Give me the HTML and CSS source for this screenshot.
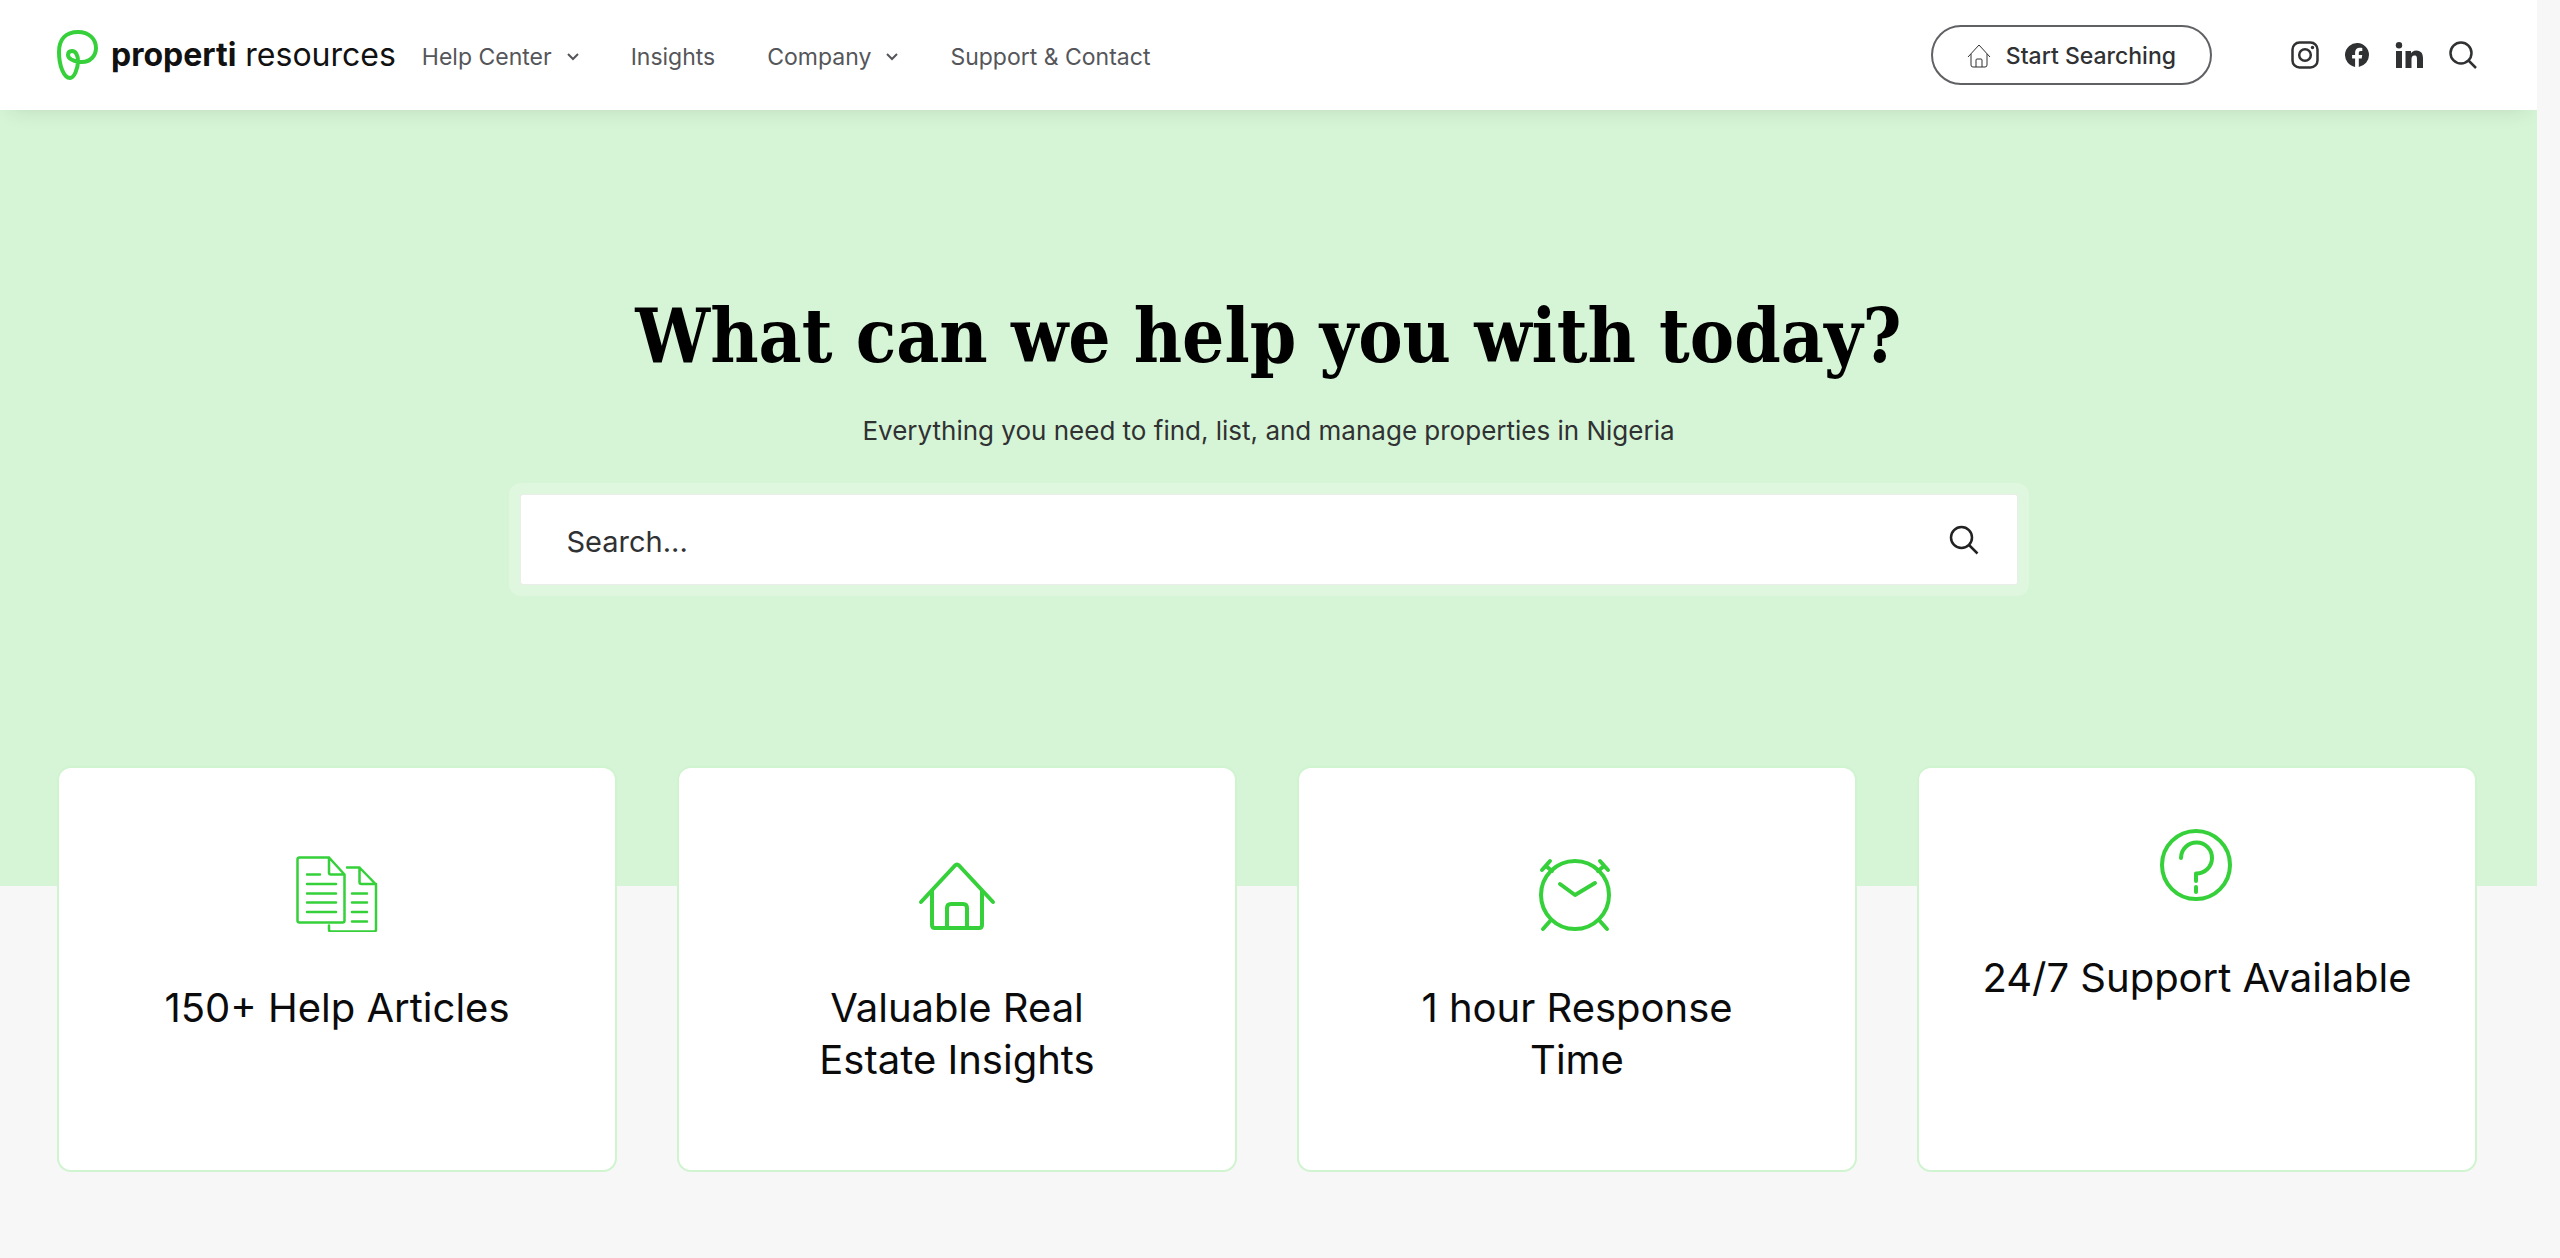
FILE: index.html
```html
<!DOCTYPE html>
<html lang="en">
<head>
<meta charset="utf-8">
<meta name="viewport" content="width=device-width, initial-scale=1">
<title>Properti Resources</title>
<link rel="stylesheet" href="styles.css">
</head>
<body>
<div class="page">
  <header class="header">
    <a class="logo" href="#">
      <svg class="logo-mark" viewBox="0 0 42 50" aria-hidden="true"><path d="M21 31C21 39 17 48 13 48C7 48 2 36 2 22C2 9 9 2 21 2C32 2 39 9 39 18C39 26 33 32 25 32C16 32 11 28 11 25C11 22 13 21 15 21C19 21 21 26 21 31Z"/></svg>
      <span class="logo-text"><b>properti</b> resources</span>
    </a>
    <nav class="nav">
      <a href="#">Help Center <svg class="chevron" viewBox="0 0 12 8" aria-hidden="true"><path d="M1 1l5 5 5-5"/></svg></a>
      <a href="#">Insights</a>
      <a href="#">Company <svg class="chevron" viewBox="0 0 12 8" aria-hidden="true"><path d="M1 1l5 5 5-5"/></svg></a>
      <a href="#">Support &amp; Contact</a>
    </nav>
    <a class="cta" href="#">
      <svg class="cta-icon" viewBox="0 0 24 24" aria-hidden="true"><path d="M1 13L12 1l11 12M4 10v11q0 2 2 2h12q2 0 2-2V10M9 23v-7q0-1 1-1h4q1 0 1 1v7"/></svg>
      Start Searching
    </a>
    <div class="social">
      <a href="#" aria-label="Instagram"><svg width="28" height="28" viewBox="0 0 28 28"><rect class="line" x="1.500" y="1.500" width="25" height="25" rx="7"/><circle class="line" cx="14" cy="14" r="5.800"/><circle cx="21.500" cy="6.500" r="1.700"/></svg></a>
      <a href="#" aria-label="Facebook"><svg width="24" height="24" viewBox="0 0 24 24"><path d="M24 12A12 12 0 1 0 10.1 23.9V15.500H7.100V12h3V9.400C10.100 6.400 11.900 4.700 14.600 4.700c1.300 0 2.700.2 2.700.2v3h-1.500c-1.500 0-2 .9-2 1.900V12h3.400l-.5 3.500h-2.900v8.400A12 12 0 0 0 24 12z"/></svg></a>
      <a href="#" aria-label="LinkedIn"><svg width="28" height="26" viewBox="0 0 28 26"><circle cx="4" cy="3.200" r="3.200"/><path d="M1 9h6v17H1zM10.500 9h5.500v2.400c.8-1.500 2.600-2.900 5.200-2.900 5.300 0 6.800 3.600 6.800 8.200V26h-6v-8.300c0-2 0-4.200-2.500-4.200s-3 1.800-3 4.100V26h-6z"/></svg></a>
      <a href="#" aria-label="Search"><svg width="28" height="28" viewBox="0 0 28 28"><circle class="line" cx="12" cy="12" r="10.500"/><path class="line" d="M19.500 19.500L27 27"/></svg></a>
    </div>
  </header>

  <main>
    <section class="hero">
      <h1>What can we help you with today?</h1>
      <p>Everything you need to find, list, and manage properties in Nigeria</p>
      <form class="search">
        <input type="text" placeholder="Search..." aria-label="Search">
        <button type="submit" aria-label="Search"><svg width="30" height="30" viewBox="0 0 30 30"><circle cx="12.500" cy="12.500" r="10.500"/><path d="M20 20l8.500 8.500"/></svg></button>
      </form>
    </section>

    <section class="cards">
      <article class="card">
        <svg class="card-icon thin" viewBox="0 0 82 76" aria-hidden="true"><path d="M33 1.500H3.500q-2 0-2 2v61q0 2 2 2h43q2 0 2-2V18.500zM33 1.500v15q0 2 2 2h13.500M11 18.500h13M11 28h29M11 37.500h29M11 46.500h29M11 56h29M51 11.500h12.500l16.500 17v45q0 2-2 2H35q-2 0-2-2v-4M63.500 11.500v14.500q0 2 2 2H80M56 37.500h15M56 46.500h15M56 56h15M56 65.500h15"/></svg>
        <h2>150+ Help Articles</h2>
      </article>
      <article class="card">
        <svg class="card-icon" viewBox="0 0 82 76" aria-hidden="true"><path d="M5 46L39 9.500q2-2 4 0L77 46M16 35v34q0 3 3 3h44q3 0 3-3V35M31 72V52q0-4 4-4h12q4 0 4 4v20"/></svg>
        <h2>Valuable Real<br>Estate Insights</h2>
      </article>
      <article class="card">
        <svg class="card-icon" viewBox="0 0 82 76" aria-hidden="true"><circle cx="39" cy="39" r="34"/><path d="M24 28l15 11 20-12M15 64l-8 9M63 64l8 9M6 14l8-9M10 10l6 5M72 14l-8-9M68 10l-6 5"/></svg>
        <h2>1 hour Response<br>Time</h2>
      </article>
      <article class="card card-high">
        <svg class="card-icon" viewBox="0 0 82 76" aria-hidden="true"><circle cx="40" cy="39" r="34"/><path d="M25 32a15.500 15.500 0 1 1 15 15.500v7.500M40 61v5"/></svg>
        <h2>24/7 Support Available</h2>
      </article>
    </section>
  </main>
</div>
</body>
</html>
```
FILE: styles.css
```css
* { box-sizing: border-box; }

body {
  margin: 0;
  background: #f7f7f7;
  font-family: Inter, "Liberation Sans", sans-serif;
  color: #303133;
}

a { color: inherit; text-decoration: none; }
svg { display: block; flex: none; }

.page { margin-right: 23px; overflow-x: clip; }

.header {
  position: relative;
  display: flex;
  align-items: center;
  height: 110px;
  padding: 0 60px 0 57px;
  background: #fff;
  box-shadow: 0 10px 20px -10px rgba(0, 0, 0, .12);
}

.logo { display: flex; align-items: center; gap: 12px; }
.logo-mark { width: 42px; height: 50px; fill: none; stroke: #35d03a; stroke-width: 4; }
.logo-text { font-size: 32px; line-height: 40px; color: #111; white-space: nowrap; }

.nav {
  display: flex;
  gap: 52px;
  margin: 4px auto 0 26px;
  font-size: 23px;
  line-height: 32px;
  color: #55565a;
}
.nav a { display: flex; align-items: center; gap: 15px; white-space: nowrap; }
.chevron { width: 12px; height: 8px; fill: none; stroke: currentColor; stroke-width: 2; }

.cta {
  display: flex;
  align-items: center;
  gap: 15px;
  height: 60px;
  padding: 2px 34px 0;
  border: 2px solid #606164;
  border-radius: 30px;
  font-size: 23px;
  font-weight: 500;
  white-space: nowrap;
}
.cta-icon { width: 24px; height: 24px; fill: none; stroke: currentColor; stroke-width: 1; }

.social { display: flex; align-items: center; gap: 26px; margin-left: 79px; fill: #303133; }
.line { fill: none; stroke: #303133; stroke-width: 2.5; }

.hero {
  display: flex;
  flex-direction: column;
  align-items: center;
  min-height: 776px;
  padding-top: 176px;
  background: #d6f5d6;
}
.hero h1 {
  margin: 0;
  font: bold 74px/100px "DejaVu Serif Condensed", "DejaVu Serif", serif;
  color: #000;
}
.hero p { margin: 25px 0 32px; font-size: 26px; line-height: 40px; }

.search {
  display: flex;
  width: 60%;
  max-width: 1520px;
  height: 113px;
  padding: 11px;
  border-radius: 12px;
  background: #dff6df;
}
.search input {
  flex: 1;
  min-width: 0;
  padding: 4px 0 0 46px;
  border: 1px solid #eaeeea;
  border-right: 0;
  border-radius: 3px 0 0 3px;
  background: #fff;
  font: inherit;
  font-size: 29px;
}
.search input::placeholder { color: #303133; opacity: 1; }
.search button {
  padding: 0 38px;
  border: 1px solid #eaeeea;
  border-left: 0;
  border-radius: 0 3px 3px 0;
  background: #fff;
}
.search svg { fill: none; stroke: #222; stroke-width: 2.5; }

.cards {
  position: relative;
  display: grid;
  grid-template-columns: repeat(4, 1fr);
  gap: 60px;
  margin-top: -120px;
  padding: 0 60px 60px 57px;
}
.card {
  display: flex;
  flex-direction: column;
  align-items: center;
  min-height: 406px;
  padding: 88px 24px 40px;
  border: 2px solid #d0f3d0;
  border-radius: 14px;
  background: #fff;
  text-align: center;
}
.card-high { padding-top: 58px; }
.card-icon {
  width: 82px;
  height: 76px;
  fill: none;
  stroke: #35d03a;
  stroke-width: 4;
  stroke-linecap: round;
  stroke-linejoin: round;
}
.thin { stroke-width: 2.5; }
.card h2 { margin: 50px 0 0; font-size: 40px; line-height: 52px; font-weight: 400; color: #0b0b0c; }
```
